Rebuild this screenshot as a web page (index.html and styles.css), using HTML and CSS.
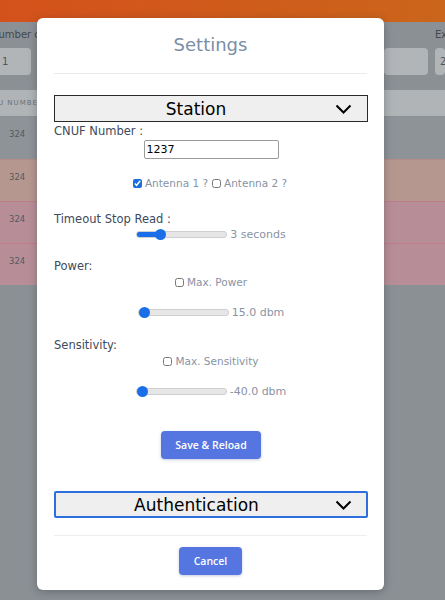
FILE: index.html
```html
<!DOCTYPE html>
<html lang="en">
<head>
    <meta charset="UTF-8">
    <meta name="viewport" content="width=device-width, initial-scale=1.0">
    <title>Settings</title>
    <link rel="stylesheet" href="styles.css">
</head>
<body>
    <div class="topbar"></div>
    <div class="page">
        <div class="filters">
            <div class="filter filter-left">
                <label>Number of</label>
                <div class="fake-input">1</div>
            </div>
            <div class="filter filter-mid">
                <label>&nbsp;</label>
                <div class="fake-input"></div>
            </div>
            <div class="filter filter-right">
                <label>Ex</label>
                <div class="fake-input">2</div>
            </div>
        </div>
        <div class="table">
            <div class="thead">U NUMBER</div>
            <div class="trow row-grey">324</div>
            <div class="trow row-tan">324</div>
            <div class="trow row-pink">324</div>
            <div class="trow row-pink">324</div>
        </div>
    </div>

    <div class="modal">
        <div class="modal-header">
            <h2>Settings</h2>
        </div>
        <div class="modal-body">
            <div class="accordion">
                <span>Station</span>
                <svg class="chevron" width="17" height="10" viewBox="0 0 17 10"><path d="M1.5 1.5 L8.5 8.5 L15.5 1.5" fill="none" stroke="#000" stroke-width="2"/></svg>
            </div>

            <div class="label label-cnuf">CNUF Number :</div>
            <div class="center">
                <input type="text" class="text-input" value="1237">
            </div>
            <div class="center checks checks-antenna">
                <label><input type="checkbox" checked> Antenna 1 ?</label>
                <label><input type="checkbox"> Antenna 2 ?</label>
            </div>

            <div class="label label-timeout">Timeout Stop Read :</div>
            <div class="center slider-row slider-first">
                <input type="range" class="range" min="1" max="10" value="3" style="--fill: 26%">
                <span class="value">3 seconds</span>
            </div>

            <div class="label label-power">Power:</div>
            <div class="center checks">
                <label><input type="checkbox"> Max. Power</label>
            </div>
            <div class="center slider-row slider-spaced">
                <input type="range" class="range" min="15" max="30" value="15" style="--fill: 0%">
                <span class="value">15.0 dbm</span>
            </div>

            <div class="label label-sens">Sensitivity:</div>
            <div class="center checks">
                <label><input type="checkbox"> Max. Sensitivity</label>
            </div>
            <div class="center slider-row slider-spaced">
                <input type="range" class="range" min="-40" max="-10" value="-40" style="--fill: 0%">
                <span class="value">-40.0 dbm</span>
            </div>

            <div class="center">
                <button class="btn btn-save">Save &amp; Reload</button>
            </div>

            <div class="accordion accordion-active">
                <span>Authentication</span>
                <svg class="chevron" width="17" height="10" viewBox="0 0 17 10"><path d="M1.5 1.5 L8.5 8.5 L15.5 1.5" fill="none" stroke="#000" stroke-width="2"/></svg>
            </div>
        </div>
        <div class="modal-footer">
            <button class="btn btn-cancel">Cancel</button>
        </div>
    </div>
</body>
</html>
```

FILE: styles.css
```css
body {
    margin: 0;
    padding: 0;
    font-family: "DejaVu Sans", sans-serif;
    background-color: #8b9095;
    height: 600px;
    overflow: hidden;
}
.topbar {
    height: 22px;
    background: linear-gradient(90deg, #d4511b, #cb651b);
}
.filters {
    display: flex;
    gap: 7px;
    padding-top: 6px;
}
.filter label {
    display: block;
    font-size: 10px;
    color: #43484e;
    height: 20px;
    line-height: 14px;
    white-space: nowrap;
}
.filter-left {
    width: 40px;
    margin-left: -9px;
}
.filter-mid {
    width: 44px;
    margin-left: auto;
}
.filter-right {
    width: 10px;
}
.fake-input {
    height: 27px;
    line-height: 27px;
    background-color: #b2b5b8;
    border-radius: 4px;
    font-size: 10px;
    color: #50555b;
    padding-left: 5px;
}
.filter-left .fake-input {
    padding-left: 11px;
}
.table {
    margin-top: 15px;
}
.thead {
    height: 26px;
    line-height: 26px;
    background-color: #b0b4b7;
    font-size: 7px;
    letter-spacing: 1px;
    color: #6a7075;
    text-indent: -2px;
}
.trow {
    height: 42px;
    box-sizing: border-box;
    padding: 12px 0 0 9px;
    font-size: 8.5px;
    color: #55595f;
}
.row-grey {
    background-color: #8e9398;
    margin-top: 1px;
}
.row-tan {
    background-color: #b6978f;
    border-top: 1px solid #b48d8a;
}
.row-pink {
    background-color: #b78e98;
    border-top: 1px solid #c17c8c;
}

.modal {
    position: absolute;
    left: 37px;
    top: 18px;
    width: 347px;
    height: 572px;
    box-sizing: border-box;
    background-color: #fff;
    border-radius: 6px;
    box-shadow: 0 2px 8px rgba(40, 45, 55, 0.35);
    display: flex;
    flex-direction: column;
}
.modal-header {
    margin: 0 17px;
    height: 55px;
    border-bottom: 1px solid #e8ebee;
    display: flex;
    align-items: center;
    justify-content: center;
}
.modal-header h2 {
    margin: 0;
    font-size: 18px;
    font-weight: normal;
    color: #7b8ea6;
    padding-bottom: 2px;
}
.modal-body {
    padding: 21px 16px 0 17px;
    flex: 1;
}
.accordion {
    height: 27px;
    box-sizing: border-box;
    border: 1px solid #2a2a2a;
    background-color: #efefef;
    display: flex;
    align-items: center;
    font-size: 17px;
    color: #000;
}
.accordion span {
    flex: 1;
    text-align: center;
    padding-left: 16px;
}
.chevron {
    margin: 0 15px 0 14px;
}
.accordion-active {
    margin-top: 32px;
    border: 2px solid #2d6fdc;
    border-radius: 2px;
}
.accordion-active .chevron {
    margin-right: 14px;
}
.label {
    font-size: 11.5px;
    color: #3d4a5c;
    line-height: 16px;
}
.label-cnuf {
    margin-top: 1px;
}
.label-timeout {
    margin-top: 20px;
}
.label-power {
    margin-top: 16px;
}
.label-sens {
    margin-top: 17px;
}
.center {
    display: flex;
    justify-content: center;
    align-items: center;
}
.text-input {
    margin-top: 1px;
    width: 135px;
    height: 19px;
    box-sizing: border-box;
    border: 1px solid #9a9a9a;
    border-radius: 2px;
    padding: 0 2px;
    font-family: "DejaVu Sans", sans-serif;
    font-size: 11px;
    color: #000;
}
.checks {
    font-size: 10.5px;
    color: #8893a4;
    line-height: 16px;
    height: 16px;
    gap: 4px;
}
.checks-antenna {
    margin-top: 16px;
    padding-right: 2px;
}
.checks label {
    display: flex;
    align-items: center;
}
.checks input {
    width: 9px;
    height: 9px;
    margin: 0 3px 0 0;
    accent-color: #1a6fe0;
}
.slider-row {
    height: 16px;
    gap: 3px;
}
.slider-first {
    margin-top: -1px;
}
.slider-spaced {
    margin-top: 14px;
}
.value {
    font-size: 11px;
    color: #8893a4;
}
.range {
    -webkit-appearance: none;
    appearance: none;
    width: 89px;
    height: 5px;
    margin: 0;
    border: 1px solid #cfcfcf;
    border-radius: 3px;
    background: linear-gradient(90deg, #1a6fe8 var(--fill), #e6e6e6 var(--fill));
}
.range::-webkit-slider-thumb {
    -webkit-appearance: none;
    width: 11px;
    height: 11px;
    border-radius: 50%;
    background-color: #1a6fe8;
    border: none;
}
.btn {
    background-color: #5575e0;
    color: #fff;
    border: none;
    border-radius: 4px;
    font-family: "Open Sans", sans-serif;
    font-weight: 600;
    font-size: 10.5px;
    height: 28px;
    cursor: pointer;
    box-shadow: 0 1px 3px rgba(60, 80, 140, 0.3);
}
.btn-save {
    margin-top: 32px;
    width: 100px;
}
.btn-cancel {
    width: 63px;
}
.modal-footer {
    margin: 0 17px;
    border-top: 1px solid #eceef0;
    padding: 11px 0 15px;
    display: flex;
    justify-content: center;
}
```
